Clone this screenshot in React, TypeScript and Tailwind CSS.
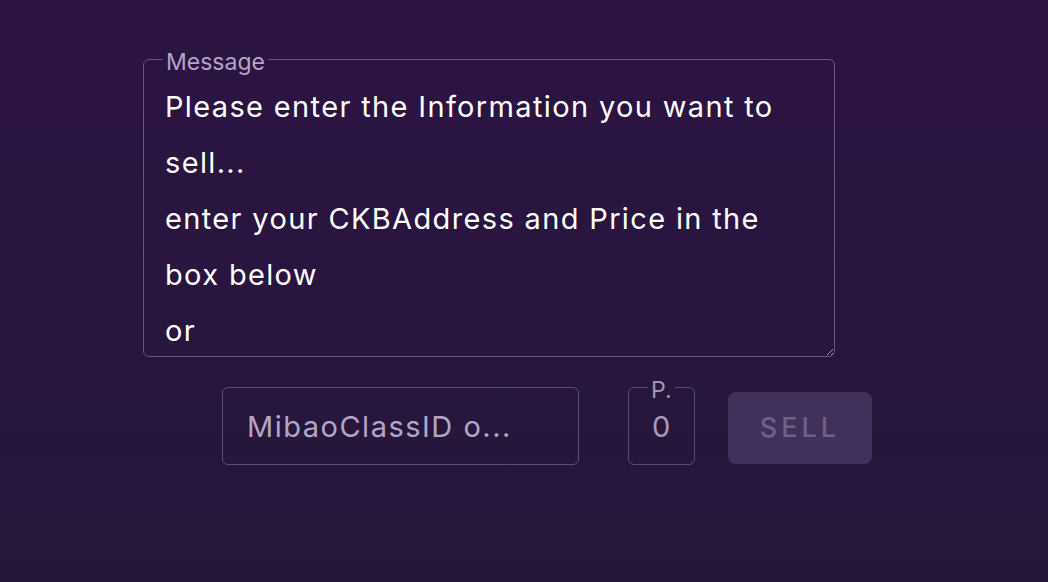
import React, { useState } from "react";

const MESSAGE_TEXT =
  "Please enter the Information you want to sell...\nenter your CKBAddress and Price in the box below\nor\nenter the MibaoClassID and your NFT will be listed";

const App = () => {
  const [message, setMessage] = useState(MESSAGE_TEXT);
  const [classId, setClassId] = useState("");
  const [price, setPrice] = useState("0");

  return (
    <div
      className="w-full h-[582px] overflow-hidden bg-gradient-to-b from-[#2c1343] to-[#25173a] [color-scheme:dark]"
      style={{ fontFamily: 'Inter, "Liberation Sans", Arial, sans-serif' }}
    >
      {/* MESSAGE */}
      <div className="pt-[44px] pl-[143px]">
        <fieldset className="w-[692px] h-[313px] flex flex-col border border-[#675784] rounded-[6px] p-0 m-0 min-w-0">
          <legend className="ml-[19px] px-[3px] pt-[6px] text-[23px] leading-[24px] text-[#b3a5c6]">
            Message
          </legend>
          <textarea
            value={message}
            onChange={(e) => setMessage(e.target.value)}
            className="flex-1 w-full bg-transparent text-white text-[29px] tracking-[1.35px] leading-[56px] pt-[5px] pl-[21px] pr-[36px] outline-none resize-y overflow-hidden"
          />
        </fieldset>
      </div>

      {/* CLASS ID / PRICE / SELL */}
      <div className="flex items-start mt-[15px] pl-[222px]">
        <input
          value={classId}
          onChange={(e) => setClassId(e.target.value)}
          placeholder="MibaoClassID o..."
          className="mt-[15px] w-[357px] h-[78px] border border-[#5e4d78] rounded-[6px] bg-transparent px-[24px] text-[29px] tracking-[1.5px] text-white placeholder:text-[#b3a6c4] outline-none"
        />

        <fieldset className="ml-[49px] w-[67px] h-[93px] border border-[#5a4973] rounded-[6px] p-0 m-0 min-w-0 flex">
          <legend className="ml-[19px] px-[3px] pt-[6px] text-[23px] leading-[24px] text-[#a295b3]">
            P.
          </legend>
          <input
            value={price}
            onChange={(e) => setPrice(e.target.value)}
            className="w-full h-[40px] bg-transparent text-[29px] leading-[40px] pl-[23px] mt-[5px] text-[#a89bb8] outline-none"
          />
        </fieldset>

        <button className="ml-[33px] mt-[20px] w-[144px] h-[72px] rounded-[8px] bg-[#41305b] text-[#6f6085] text-[27px] font-medium tracking-[4px] uppercase">
          Sell
        </button>
      </div>
    </div>
  );
};

export default App;
